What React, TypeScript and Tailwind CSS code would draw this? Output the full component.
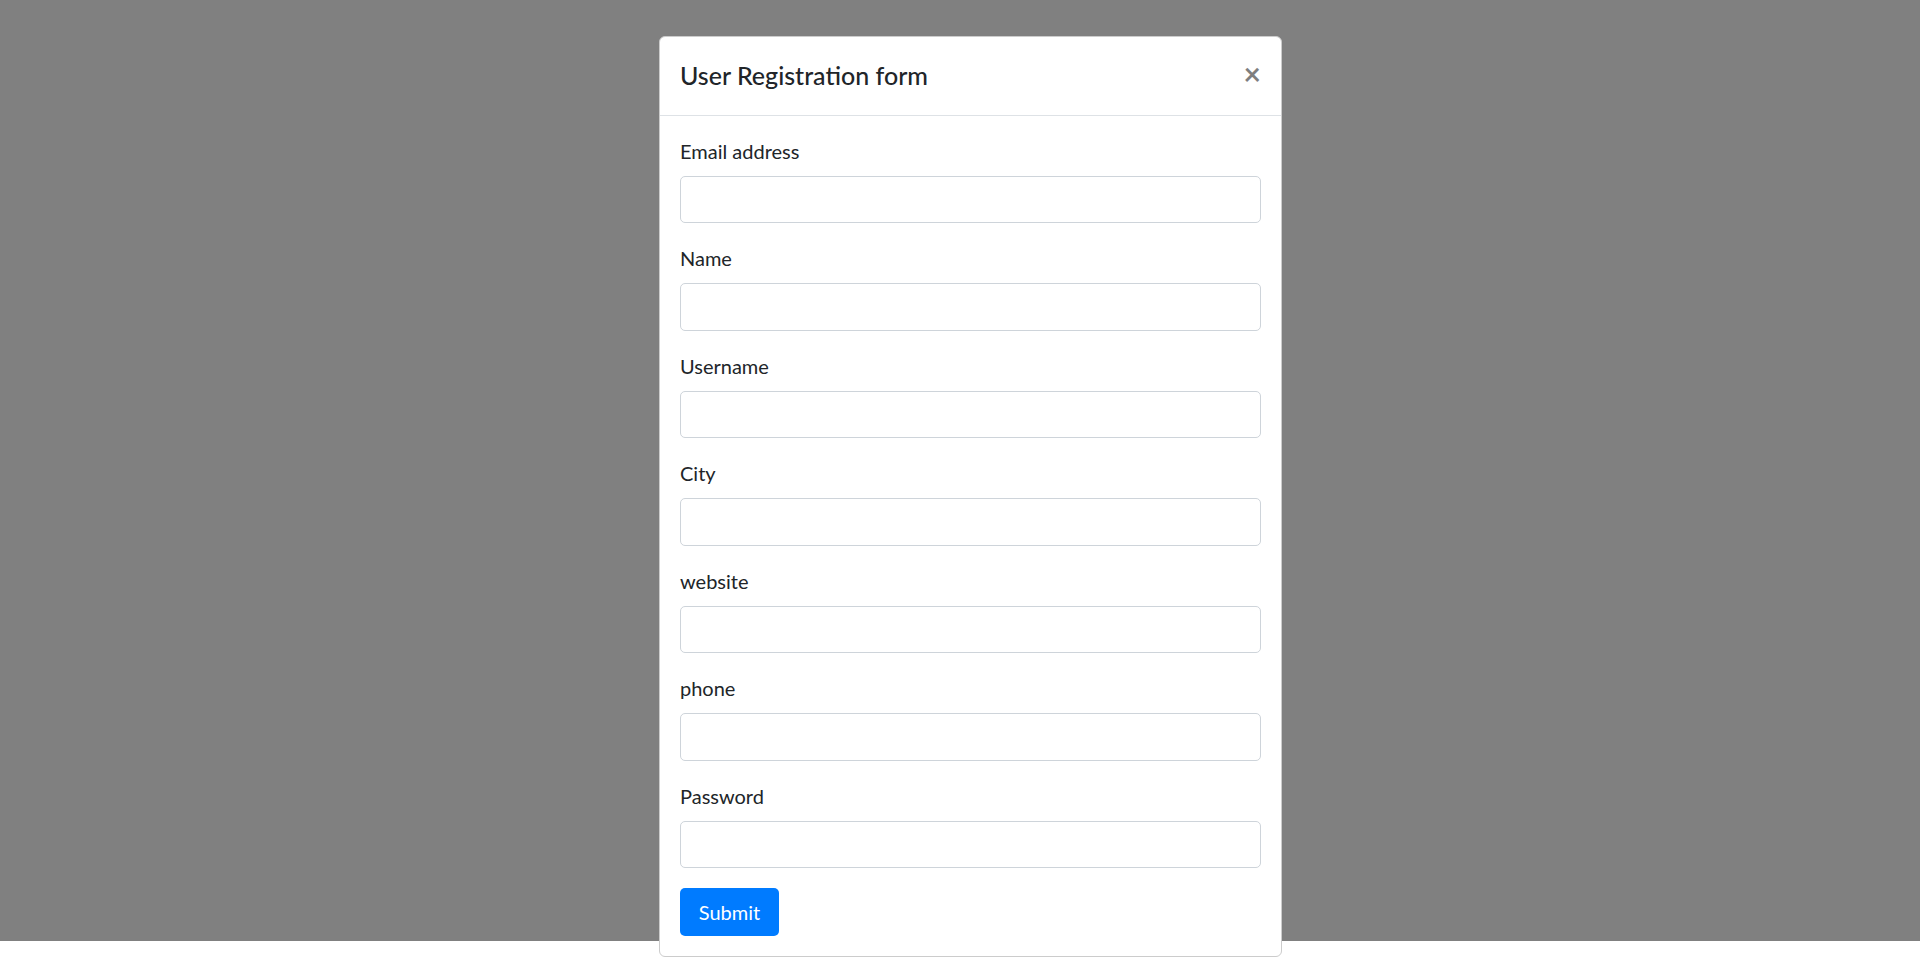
const fields = ["Email address", "Name", "Username", "City", "website", "phone", "Password"]

const App = () => {
	return (
		<div className="h-[980px] w-full overflow-hidden bg-white font-['Segoe_UI','Lato',sans-serif] text-[#212529]">
			<div className="flex h-[941px] justify-center bg-[#808080] pt-[36px] pl-[21px]">
				<div className="h-fit w-[623px] rounded-[6px] border border-[#cccccc] bg-white">
					<div className="flex items-start justify-between border-b border-[#dee2e6] px-[20px] py-[20px]">
						<h5 className="text-[25px] leading-[37.5px] font-medium">User Registration form</h5>
						<button
							type="button"
							className="-mt-[2px] text-[30px] leading-[37.5px] font-bold text-black opacity-50"
						>
							×
						</button>
					</div>
					<form className="p-[20px]">
						{fields.map((label) => (
							<div key={label} className="mb-[20px]">
								<label className="mb-[10px] block text-[20px] leading-[30px]">{label}</label>
								<input
									type={label === "Password" ? "password" : "text"}
									className="block h-[47.5px] w-full rounded-[5px] border border-[#ced4da] bg-white px-[15px] text-[20px]"
								/>
							</div>
						))}
						<button
							type="submit"
							className="h-[47.5px] rounded-[5px] bg-[#007bff] px-[18.75px] text-[20px] leading-[30px] text-white"
						>
							Submit
						</button>
					</form>
				</div>
			</div>
		</div>
	)
}

export default App
